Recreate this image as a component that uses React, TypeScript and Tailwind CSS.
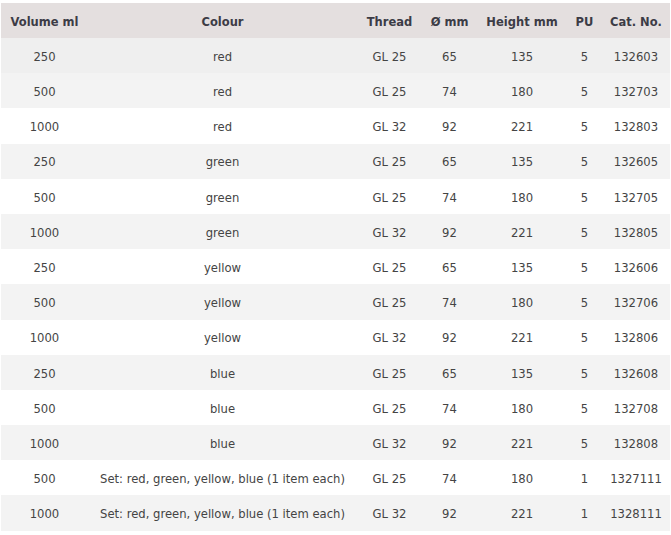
import React from "react";

const rows: [string, string, string, string, string, string, string][] = [
  ["250", "red", "GL 25", "65", "135", "5", "132603"],
  ["500", "red", "GL 25", "74", "180", "5", "132703"],
  ["1000", "red", "GL 32", "92", "221", "5", "132803"],
  ["250", "green", "GL 25", "65", "135", "5", "132605"],
  ["500", "green", "GL 25", "74", "180", "5", "132705"],
  ["1000", "green", "GL 32", "92", "221", "5", "132805"],
  ["250", "yellow", "GL 25", "65", "135", "5", "132606"],
  ["500", "yellow", "GL 25", "74", "180", "5", "132706"],
  ["1000", "yellow", "GL 32", "92", "221", "5", "132806"],
  ["250", "blue", "GL 25", "65", "135", "5", "132608"],
  ["500", "blue", "GL 25", "74", "180", "5", "132708"],
  ["1000", "blue", "GL 32", "92", "221", "5", "132808"],
  ["500", "Set: red, green, yellow, blue (1 item each)", "GL 25", "74", "180", "1", "1327111"],
  ["1000", "Set: red, green, yellow, blue (1 item each)", "GL 32", "92", "221", "1", "1328111"],
];

const headers = ["Volume ml", "Colour", "Thread", "Ø mm", "Height mm", "PU", "Cat. No."];

export default function App() {
  return (
    <div className="w-[671px] h-[535px] bg-white pt-[3px] pl-[1px] font-['DejaVu_Sans',Verdana,sans-serif] text-[11.6px] text-[#444]">
      <table className="w-[669px] table-fixed border-collapse">
        <colgroup>
          <col className="w-[87px]" />
          <col className="w-[269px]" />
          <col className="w-[65px]" />
          <col className="w-[55px]" />
          <col className="w-[90px]" />
          <col className="w-[35px]" />
          <col className="w-[68px]" />
        </colgroup>
        <thead>
          <tr className="h-[35px] bg-[#e4dfdf]">
            {headers.map((h) => (
              <th key={h} className="p-0 pt-[4px] text-center text-[11.5px] font-bold text-[#3c3c46] whitespace-nowrap">
                {h}
              </th>
            ))}
          </tr>
        </thead>
        <tbody>
          {rows.map((r, i) => (
            <tr
              key={i}
              className={
                "h-[35.2px] " +
                (i === 0 ? "bg-[#efefef]" : i % 2 === 1 ? "bg-[#f3f3f3]" : "bg-white")
              }
            >
              {r.map((c, j) => (
                <td key={j} className="p-0 pt-[4px] text-center whitespace-nowrap">
                  {c}
                </td>
              ))}
            </tr>
          ))}
        </tbody>
      </table>
    </div>
  );
}
